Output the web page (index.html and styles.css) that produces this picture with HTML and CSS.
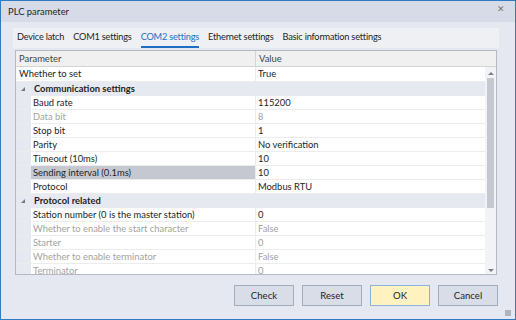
FILE: index.html
```html
<!DOCTYPE html>
<html lang="en">
<head>
    <meta charset="UTF-8">
    <title>PLC parameter</title>
    <link rel="stylesheet" href="styles.css">
</head>
<body>
    <div class="window">
        <div class="title-bar">
            <span class="title">PLC parameter</span>
            <span class="close">&#x2715;</span>
        </div>

        <div class="tabs">
            <span class="tab">Device latch</span>
            <span class="tab">COM1 settings</span>
            <span class="tab active">COM2 settings</span>
            <span class="tab">Ethernet settings</span>
            <span class="tab">Basic information settings</span>
        </div>

        <div class="grid">
            <div class="grid-head">
                <div class="head-cell name-col">Parameter</div>
                <div class="head-cell">Value</div>
            </div>
            <div class="grid-body">
                <div class="rows">
                    <div class="row top">
                        <div class="name">Whether to set</div>
                        <div class="value">True</div>
                    </div>
                    <div class="row group">
                        <span class="expander"></span>
                        <div class="name">Communication settings</div>
                    </div>
                    <div class="row child">
                        <div class="margin"></div>
                        <div class="name">Baud rate</div>
                        <div class="value">115200</div>
                    </div>
                    <div class="row child disabled">
                        <div class="margin"></div>
                        <div class="name">Data bit</div>
                        <div class="value">8</div>
                    </div>
                    <div class="row child">
                        <div class="margin"></div>
                        <div class="name">Stop bit</div>
                        <div class="value">1</div>
                    </div>
                    <div class="row child">
                        <div class="margin"></div>
                        <div class="name">Parity</div>
                        <div class="value">No verification</div>
                    </div>
                    <div class="row child">
                        <div class="margin"></div>
                        <div class="name">Timeout (10ms)</div>
                        <div class="value">10</div>
                    </div>
                    <div class="row child selected">
                        <div class="margin"></div>
                        <div class="name">Sending interval (0.1ms)</div>
                        <div class="value">10</div>
                    </div>
                    <div class="row child">
                        <div class="margin"></div>
                        <div class="name">Protocol</div>
                        <div class="value">Modbus RTU</div>
                    </div>
                    <div class="row group">
                        <span class="expander"></span>
                        <div class="name">Protocol related</div>
                    </div>
                    <div class="row child">
                        <div class="margin"></div>
                        <div class="name">Station number (0 is the master station)</div>
                        <div class="value">0</div>
                    </div>
                    <div class="row child disabled">
                        <div class="margin"></div>
                        <div class="name">Whether to enable the start character</div>
                        <div class="value">False</div>
                    </div>
                    <div class="row child disabled">
                        <div class="margin"></div>
                        <div class="name">Starter</div>
                        <div class="value">0</div>
                    </div>
                    <div class="row child disabled">
                        <div class="margin"></div>
                        <div class="name">Whether to enable terminator</div>
                        <div class="value">False</div>
                    </div>
                    <div class="row child disabled">
                        <div class="margin"></div>
                        <div class="name">Terminator</div>
                        <div class="value">0</div>
                    </div>
                </div>
                <div class="scrollbar">
                    <span class="arrow up"></span>
                    <div class="thumb"></div>
                    <span class="arrow down"></span>
                </div>
            </div>
        </div>

        <div class="buttons">
            <button class="btn">Check</button>
            <button class="btn">Reset</button>
            <button class="btn default">OK</button>
            <button class="btn">Cancel</button>
        </div>
        <span class="grip"></span>
    </div>
</body>
</html>
```

FILE: styles.css
```css
* {
    box-sizing: border-box;
}
body {
    margin: 0;
    font-family: Lato, "Liberation Sans", sans-serif;
    font-size: 9.4px;
    color: #1e1e1e;
}
.window {
    position: relative;
    width: 516px;
    height: 320px;
    border: 1px solid #2f7bc3;
    background-color: #e5e8f1;
    overflow: hidden;
}
.title-bar {
    display: flex;
    align-items: center;
    justify-content: space-between;
    height: 21px;
    padding: 0 10px 0 7px;
    background-color: #d6dbe7;
}
.title {
    font-size: 9.4px;
}
.close {
    font-size: 9px;
    color: #777;
    margin-top: -6px;
}
.tabs {
    display: flex;
    gap: 9px;
    height: 20px;
    margin: 6px 16px 0 12px;
    padding-left: 4px;
    background-color: #eff0f3;
}
.tab {
    font-size: 9.2px;
    letter-spacing: -0.2px;
    line-height: 18px;
    white-space: nowrap;
}
.tab.active {
    color: #1c6fc3;
    border-bottom: 2px solid #1c6fc3;
}
.grid {
    width: 482px;
    height: 225px;
    margin: 2px 0 0 14px;
    border: 1px solid #b4b9c4;
    background-color: #fff;
    overflow: hidden;
}
.grid-head {
    display: flex;
    height: 16px;
    background-color: #f0f0f0;
    border-bottom: 1px solid #d4d4d4;
}
.head-cell {
    padding-left: 3px;
    line-height: 15px;
    color: #444;
}
.name-col {
    width: 240px;
    border-right: 1px solid #d4d4d4;
}
.grid-body {
    display: flex;
}
.rows {
    width: 469px;
}
.row {
    display: flex;
    height: 14px;
    line-height: 13px;
    border-bottom: 1px solid #ececec;
}
.row.top {
    height: 15px;
    line-height: 14px;
}
.row .name {
    width: 240px;
    padding-left: 3px;
    border-right: 1px solid #ececec;
    white-space: nowrap;
}
.row .value {
    padding-left: 2px;
}
.row.child .margin {
    width: 15px;
    background-color: #e7e9f1;
}
.row.child .name {
    width: 225px;
    padding-left: 2px;
}
.row.group {
    background-color: #e7e9f1;
    border-bottom-color: #e7e9f1;
    font-weight: bold;
    align-items: center;
}
.row.group .name {
    width: auto;
    border-right: none;
    padding-left: 9px;
}
.expander {
    width: 0;
    height: 0;
    margin-left: 5px;
    border-left: 4px solid transparent;
    border-bottom: 4px solid #777;
}
.row.disabled {
    color: #a3a3a3;
}
.row.selected .name {
    background-color: #c5c8d0;
}
.scrollbar {
    display: flex;
    flex-direction: column;
    align-items: center;
    width: 11px;
    height: 208px;
    background-color: #f2f3f6;
}
.arrow {
    width: 0;
    height: 0;
    margin: 5px 0 3px;
    border-left: 3px solid transparent;
    border-right: 3px solid transparent;
}
.arrow.up {
    border-bottom: 3px solid #7a7f8a;
}
.arrow.down {
    margin-top: auto;
    border-top: 3px solid #7a7f8a;
}
.thumb {
    width: 7px;
    height: 130px;
    background-color: #c5c8d0;
}
.buttons {
    display: flex;
    justify-content: flex-end;
    gap: 8px;
    margin: 10px 17px 0 0;
}
.btn {
    width: 60px;
    height: 21px;
    font-family: inherit;
    font-size: 9.6px;
    color: #1e1e1e;
    background-color: #d9dde7;
    border: 1px solid #a4abb9;
}
.btn.default {
    background-color: #fdf2c0;
    border-color: #8fb1dc;
}
.grip {
    position: absolute;
    right: 4px;
    bottom: 3px;
    width: 6px;
    height: 6px;
    background: radial-gradient(circle, #9aa0ab 0.6px, transparent 1px) 0 0 / 2px 2px;
}
```
